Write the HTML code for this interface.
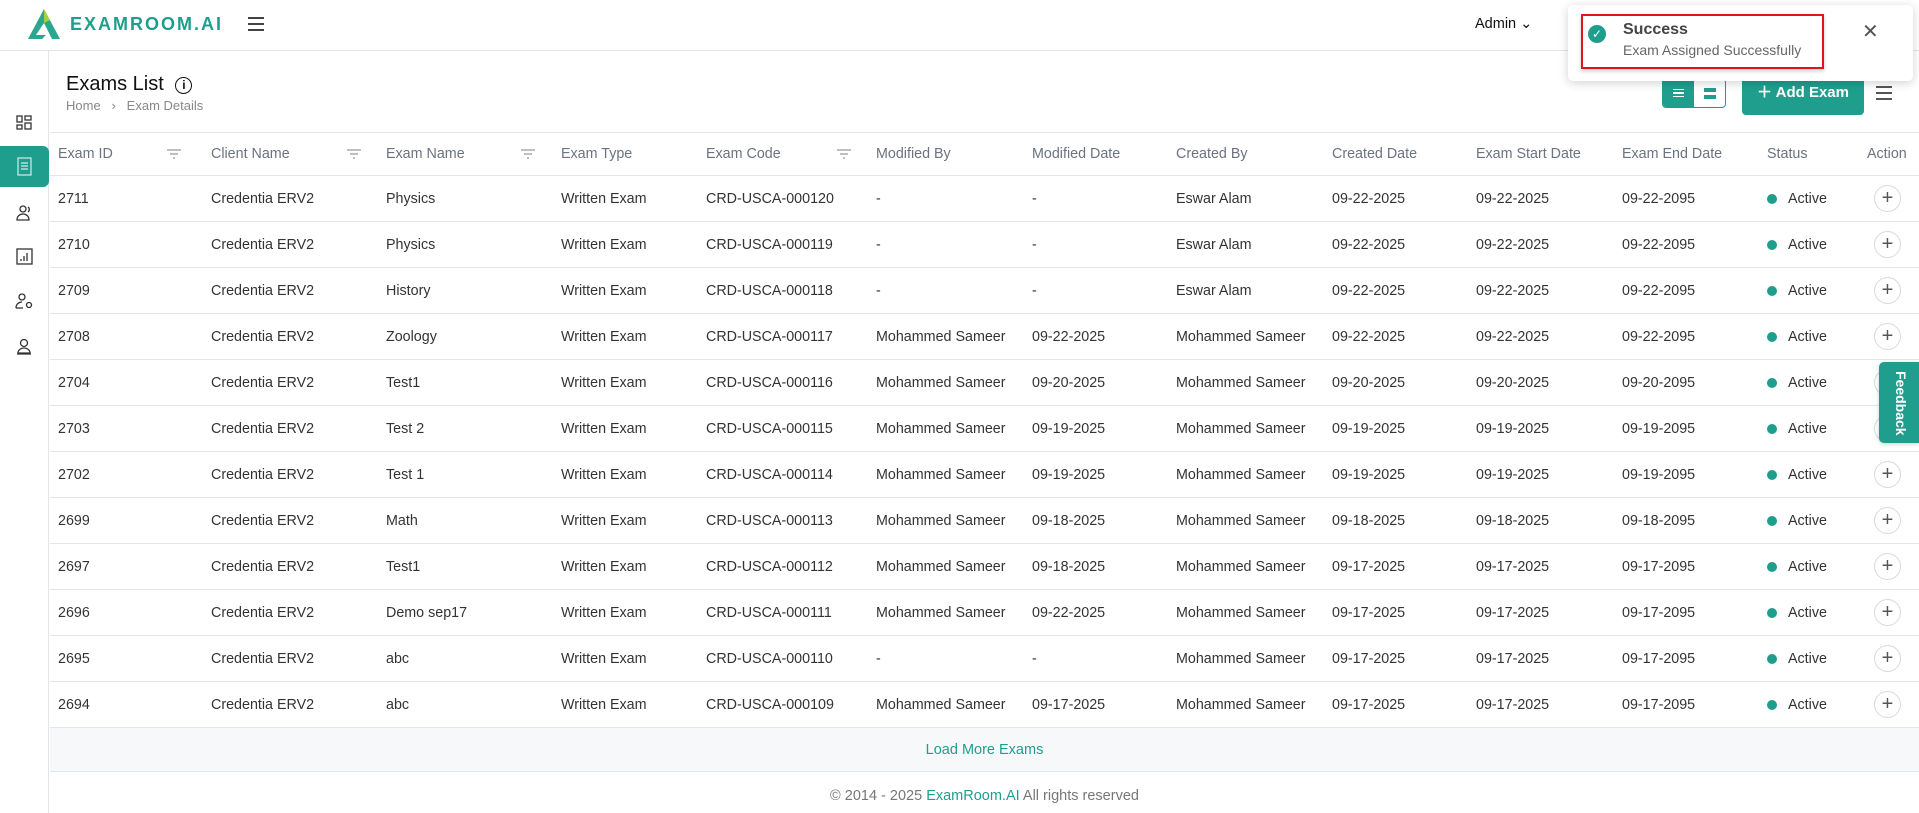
<!DOCTYPE html>
<html><head><meta charset="utf-8"><style>
*{box-sizing:border-box;margin:0;padding:0}
body{width:1919px;height:813px;overflow:hidden;background:#fff;font-family:"Liberation Sans",Arial,sans-serif;color:#333;position:relative}
.hdr{position:absolute;left:0;top:0;width:1919px;height:51px;border-bottom:1px solid #e3e5ea;background:#fff}
.side{position:absolute;left:0;top:51px;width:49px;height:762px;border-right:1px solid #e3e5ea}
.teal{color:#1f9e8e}
table{position:absolute;left:50px;top:132px;width:1869px;border-collapse:collapse;font-size:14.3px}
th{height:43px;font-weight:normal;color:#6b7280;text-align:left;border-top:1px solid #e3e5ea;border-bottom:1px solid #e3e5ea;position:relative;white-space:nowrap}
td{height:46px;border-bottom:1px solid #e3e5ea;white-space:nowrap;color:#333}
.dot{display:inline-block;width:10px;height:10px;border-radius:50%;background:#1f9e8e;margin-right:11px;vertical-align:-1px}
.plus{display:inline-block;width:27px;height:27px;border:1px solid #d6d9e0;border-radius:50%;text-align:center;line-height:25px;font-size:20px;color:#555}
.flt{position:absolute;top:15px}
</style></head><body>
<div class="hdr">
 <svg style="position:absolute;left:28px;top:9px" width="32" height="30" viewBox="0 0 32 30"><polygon points="16,0 32,30 24,30 16,14 8,26 18,26 14,30 0,30" fill="#2aa88f"/><polygon points="16,0 22,11 16,14" fill="#a6d13a"/></svg>
 <div style="position:absolute;left:70px;top:14px;font-size:18px;font-weight:bold;letter-spacing:2px;color:#1f9e8e">EXAMROOM.AI</div>
 <div style="position:absolute;left:248px;top:17px;width:16px">
  <div style="height:2px;background:#444;margin-bottom:4px"></div><div style="height:2px;background:#444;margin-bottom:4px"></div><div style="height:2px;background:#444"></div></div>
 <div style="position:absolute;left:1475px;top:16px;font-size:14.5px;color:#111">Admin ⌄</div>
</div>
<div class="side">
 <svg style="position:absolute;left:16px;top:64px" width="16" height="16" viewBox="0 0 16 16" fill="none" stroke="#333" stroke-width="1.3"><rect x="1" y="1" width="5" height="6"/><rect x="9" y="1" width="6" height="4"/><rect x="1" y="10" width="5" height="4"/><rect x="9" y="8" width="6" height="6"/></svg>
 <div style="position:absolute;left:0;top:95px;width:49px;height:41px;background:#1f9e8e;border-radius:0 6px 6px 0"></div>
 <svg style="position:absolute;left:17px;top:106px" width="15" height="19" viewBox="0 0 15 19" fill="none" stroke="#cfeee9" stroke-width="1.2"><rect x="1" y="1" width="13" height="17"/><path d="M4 6h7M4 9h7M4 12h7"/></svg>
 <svg style="position:absolute;left:15px;top:153px" width="20" height="18" viewBox="0 0 20 18" fill="none" stroke="#333" stroke-width="1.3"><circle cx="8" cy="5" r="3"/><path d="M2 16c0-4 3-6 6-6s6 2 6 6z"/><path d="M13 3a3 3 0 010 5"/></svg>
 <svg style="position:absolute;left:16px;top:197px" width="17" height="17" viewBox="0 0 17 17" fill="none" stroke="#333" stroke-width="1.3"><rect x="1" y="1" width="15" height="15"/><path d="M5 13v-2M8 13V8M11 13V5"/></svg>
 <svg style="position:absolute;left:14px;top:241px" width="22" height="18" viewBox="0 0 22 18" fill="none" stroke="#333" stroke-width="1.3"><circle cx="8" cy="5" r="3"/><path d="M2 16c0-4 3-6 6-6"/><path d="M2 16h7"/><circle cx="15" cy="13" r="2.5"/></svg>
 <svg style="position:absolute;left:16px;top:287px" width="16" height="17" viewBox="0 0 16 17" fill="none" stroke="#333" stroke-width="1.3"><circle cx="8" cy="5" r="3.5"/><path d="M2 15c0-3 3-5 6-5s6 2 6 5zM1 16h14"/></svg>
</div>
<div style="position:absolute;left:66px;top:73px;font-size:20px;color:#111">Exams List <span style="display:inline-block;width:17px;height:17px;border:1.8px solid #111;border-radius:50%;font-size:12px;font-weight:bold;text-align:center;line-height:14px;vertical-align:1px;margin-left:6px">i</span></div>
<div style="position:absolute;left:66px;top:98px;font-size:13px;color:#888">Home &nbsp;&nbsp;›&nbsp;&nbsp; Exam Details</div>
<div style="position:absolute;left:1662px;top:78px;width:64px;height:30px;border:1px solid #1f9e8e;border-radius:4px;overflow:hidden">
 <div style="position:absolute;left:0;top:0;width:31px;height:30px;background:#1f9e8e"></div>
 <div style="position:absolute;left:10px;top:10px;width:11px;height:8px;border-top:1.5px solid #fff;border-bottom:1.5px solid #fff"><div style="margin-top:2px;height:1.5px;background:#fff"></div></div>
 <div style="position:absolute;left:41px;top:9px;width:12px;height:4px;background:#1f9e8e"></div>
 <div style="position:absolute;left:41px;top:16px;width:12px;height:4px;background:#1f9e8e"></div>
</div>
<div style="position:absolute;left:1742px;top:71px;width:122px;height:44px;background:#1f9e8e;border-radius:4px;color:#fff;font-size:15px;font-weight:bold;line-height:44px;text-align:center">＋ Add Exam</div>
<div style="position:absolute;left:1876px;top:86px;width:16px">
 <div style="height:2px;background:#555;margin-bottom:4px"></div><div style="height:2px;background:#555;margin-bottom:4px"></div><div style="height:2px;background:#555"></div></div>
<table>
<colgroup><col style="width:161px"><col style="width:175px"><col style="width:175px"><col style="width:145px"><col style="width:170px"><col style="width:156px"><col style="width:144px"><col style="width:156px"><col style="width:144px"><col style="width:146px"><col style="width:145px"><col style="width:100px"><col></colgroup>
<tr><th style="padding-left:8px">Exam ID<svg class="flt" style="left:116px" width="16" height="12"><path d="M1 2h14M4 6h8M7 10h2" stroke="#999" stroke-width="1.3"/></svg></th><th>Client Name<svg class="flt" style="left:135px" width="16" height="12"><path d="M1 2h14M4 6h8M7 10h2" stroke="#999" stroke-width="1.3"/></svg></th><th>Exam Name<svg class="flt" style="left:134px" width="16" height="12"><path d="M1 2h14M4 6h8M7 10h2" stroke="#999" stroke-width="1.3"/></svg></th><th>Exam Type</th><th>Exam Code<svg class="flt" style="left:130px" width="16" height="12"><path d="M1 2h14M4 6h8M7 10h2" stroke="#999" stroke-width="1.3"/></svg></th><th>Modified By</th><th>Modified Date</th><th>Created By</th><th>Created Date</th><th>Exam Start Date</th><th>Exam End Date</th><th>Status</th><th>Action</th></tr>
<tr><td style="padding-left:8px">2711</td><td>Credentia ERV2</td><td>Physics</td><td>Written Exam</td><td>CRD-USCA-000120</td><td>-</td><td>-</td><td>Eswar Alam</td><td>09-22-2025</td><td>09-22-2025</td><td>09-22-2095</td><td><span class="dot"></span>Active</td><td style="padding-left:7px"><span class="plus">+</span></td></tr>
<tr><td style="padding-left:8px">2710</td><td>Credentia ERV2</td><td>Physics</td><td>Written Exam</td><td>CRD-USCA-000119</td><td>-</td><td>-</td><td>Eswar Alam</td><td>09-22-2025</td><td>09-22-2025</td><td>09-22-2095</td><td><span class="dot"></span>Active</td><td style="padding-left:7px"><span class="plus">+</span></td></tr>
<tr><td style="padding-left:8px">2709</td><td>Credentia ERV2</td><td>History</td><td>Written Exam</td><td>CRD-USCA-000118</td><td>-</td><td>-</td><td>Eswar Alam</td><td>09-22-2025</td><td>09-22-2025</td><td>09-22-2095</td><td><span class="dot"></span>Active</td><td style="padding-left:7px"><span class="plus">+</span></td></tr>
<tr><td style="padding-left:8px">2708</td><td>Credentia ERV2</td><td>Zoology</td><td>Written Exam</td><td>CRD-USCA-000117</td><td>Mohammed Sameer</td><td>09-22-2025</td><td>Mohammed Sameer</td><td>09-22-2025</td><td>09-22-2025</td><td>09-22-2095</td><td><span class="dot"></span>Active</td><td style="padding-left:7px"><span class="plus">+</span></td></tr>
<tr><td style="padding-left:8px">2704</td><td>Credentia ERV2</td><td>Test1</td><td>Written Exam</td><td>CRD-USCA-000116</td><td>Mohammed Sameer</td><td>09-20-2025</td><td>Mohammed Sameer</td><td>09-20-2025</td><td>09-20-2025</td><td>09-20-2095</td><td><span class="dot"></span>Active</td><td style="padding-left:7px"><span class="plus">+</span></td></tr>
<tr><td style="padding-left:8px">2703</td><td>Credentia ERV2</td><td>Test 2</td><td>Written Exam</td><td>CRD-USCA-000115</td><td>Mohammed Sameer</td><td>09-19-2025</td><td>Mohammed Sameer</td><td>09-19-2025</td><td>09-19-2025</td><td>09-19-2095</td><td><span class="dot"></span>Active</td><td style="padding-left:7px"><span class="plus">+</span></td></tr>
<tr><td style="padding-left:8px">2702</td><td>Credentia ERV2</td><td>Test 1</td><td>Written Exam</td><td>CRD-USCA-000114</td><td>Mohammed Sameer</td><td>09-19-2025</td><td>Mohammed Sameer</td><td>09-19-2025</td><td>09-19-2025</td><td>09-19-2095</td><td><span class="dot"></span>Active</td><td style="padding-left:7px"><span class="plus">+</span></td></tr>
<tr><td style="padding-left:8px">2699</td><td>Credentia ERV2</td><td>Math</td><td>Written Exam</td><td>CRD-USCA-000113</td><td>Mohammed Sameer</td><td>09-18-2025</td><td>Mohammed Sameer</td><td>09-18-2025</td><td>09-18-2025</td><td>09-18-2095</td><td><span class="dot"></span>Active</td><td style="padding-left:7px"><span class="plus">+</span></td></tr>
<tr><td style="padding-left:8px">2697</td><td>Credentia ERV2</td><td>Test1</td><td>Written Exam</td><td>CRD-USCA-000112</td><td>Mohammed Sameer</td><td>09-18-2025</td><td>Mohammed Sameer</td><td>09-17-2025</td><td>09-17-2025</td><td>09-17-2095</td><td><span class="dot"></span>Active</td><td style="padding-left:7px"><span class="plus">+</span></td></tr>
<tr><td style="padding-left:8px">2696</td><td>Credentia ERV2</td><td>Demo sep17</td><td>Written Exam</td><td>CRD-USCA-000111</td><td>Mohammed Sameer</td><td>09-22-2025</td><td>Mohammed Sameer</td><td>09-17-2025</td><td>09-17-2025</td><td>09-17-2095</td><td><span class="dot"></span>Active</td><td style="padding-left:7px"><span class="plus">+</span></td></tr>
<tr><td style="padding-left:8px">2695</td><td>Credentia ERV2</td><td>abc</td><td>Written Exam</td><td>CRD-USCA-000110</td><td>-</td><td>-</td><td>Mohammed Sameer</td><td>09-17-2025</td><td>09-17-2025</td><td>09-17-2095</td><td><span class="dot"></span>Active</td><td style="padding-left:7px"><span class="plus">+</span></td></tr>
<tr><td style="padding-left:8px">2694</td><td>Credentia ERV2</td><td>abc</td><td>Written Exam</td><td>CRD-USCA-000109</td><td>Mohammed Sameer</td><td>09-17-2025</td><td>Mohammed Sameer</td><td>09-17-2025</td><td>09-17-2025</td><td>09-17-2095</td><td><span class="dot"></span>Active</td><td style="padding-left:7px"><span class="plus">+</span></td></tr>
</table>
<div style="position:absolute;left:50px;top:728px;width:1869px;height:44px;background:#f7f8fa;border-bottom:1px solid #e3e5ea;text-align:center;line-height:44px;font-size:14.5px;color:#1f9e8e">Load More Exams</div>
<div style="position:absolute;left:50px;top:788px;width:1869px;text-align:center;font-size:14.5px;color:#777">© 2014 - 2025 <span class="teal">ExamRoom.AI</span> All rights reserved</div>
<div style="position:absolute;left:1879px;top:362px;width:40px;height:81px;background:#1f9e8e;border-radius:5px 0 0 5px;box-shadow:0 1px 4px rgba(0,0,0,.2)"><div style="position:absolute;left:30px;top:9px;transform:rotate(90deg);transform-origin:0 0;color:#fff;font-weight:bold;font-size:14px;white-space:nowrap">Feedback</div></div>
<div style="position:absolute;left:1568px;top:5px;width:345px;height:76px;background:#fff;border-radius:5px;box-shadow:0 2px 10px rgba(0,0,0,.18)">
 <div style="position:absolute;left:13px;top:9px;width:243px;height:55px;border:2px solid #e0141e;box-shadow:0 2px 4px rgba(0,0,0,.2)"></div>
 <div style="position:absolute;left:20px;top:20px;width:18px;height:18px;border-radius:50%;background:#1f9e8e;color:#fff;font-size:12px;text-align:center;line-height:18px">✓</div>
 <div style="position:absolute;left:55px;top:16px;font-size:16px;font-weight:bold;color:#444">Success</div>
 <div style="position:absolute;left:55px;top:37px;font-size:14px;color:#666">Exam Assigned Successfully</div>
 <div style="position:absolute;left:294px;top:14px;font-size:20px;color:#555">✕</div>
</div>
</body></html>
